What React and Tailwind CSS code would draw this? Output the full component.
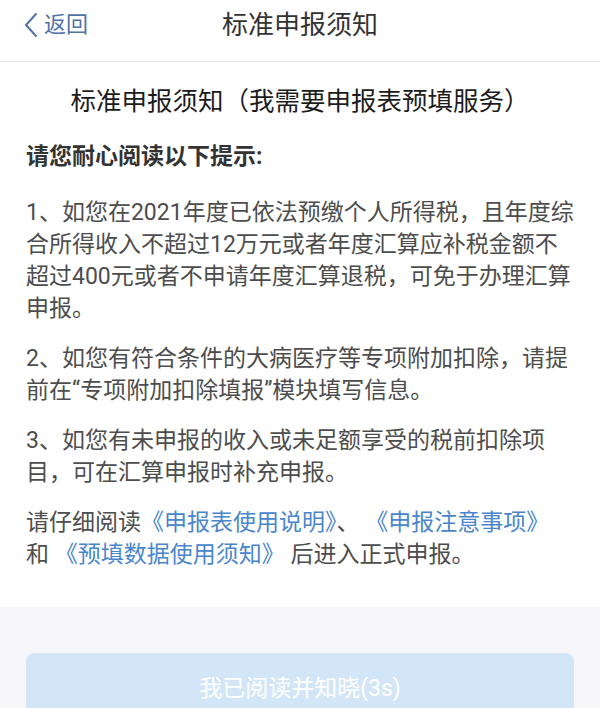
const paragraphs = [
    [
        "1、如您在2021年度已依法预缴个人所得税，且年度综",
        "合所得收入不超过12万元或者年度汇算应补税金额不",
        "超过400元或者不申请年度汇算退税，可免于办理汇算",
        "申报。",
    ],
    [
        "2、如您有符合条件的大病医疗等专项附加扣除，请提",
        "前在“专项附加扣除填报”模块填写信息。",
    ],
    [
        "3、如您有未申报的收入或未足额享受的税前扣除项",
        "目，可在汇算申报时补充申报。",
    ],
];

const App = () => {
    return (
        <div className="min-h-[708px] bg-[#f7f7f9] font-['Roboto','Noto_Sans_CJK_SC',sans-serif]">
            {/* Header */}
            <div className="relative flex h-[62px] items-start justify-center border-b border-[#e6e6e6] bg-white pt-[8px]">
                <button className="absolute left-[24px] top-[8px] flex items-center gap-[6px] text-[22px] leading-[34px] text-[#4f72a8]">
                    <svg width="14" height="26" viewBox="0 0 14 26" fill="none">
                        <path d="M12 2 L2 13 L12 24" stroke="#4f72a8" strokeWidth="2" strokeLinecap="round" strokeLinejoin="round" />
                    </svg>
                    <span>返回</span>
                </button>
                <h1 className="text-[26px] leading-[34px] text-[#333333]">标准申报须知</h1>
            </div>

            {/* Main Content */}
            <div className="bg-white px-[26px] pt-[21px] pb-[36px]">
                <h2 className="text-center text-[25.5px] leading-[36px] text-[#1c1c1c]">
                    标准申报须知（我需要申报表预填服务）
                </h2>
                <p className="mt-[22px] text-[23px] font-bold leading-[31px] text-[#333333]">
                    请您耐心阅读以下提示:
                </p>

                <div className="mt-[25px] text-[23px] leading-[32px] text-[#4d4d4d]">
                    {paragraphs.map((lines, i) => (
                        <p key={i} className={i > 0 ? "mt-[18px]" : ""}>
                            {lines.map((line) => (
                                <span key={line} className="block whitespace-nowrap">
                                    {line}
                                </span>
                            ))}
                        </p>
                    ))}
                    <p className="mt-[18px]">
                        <span className="block whitespace-nowrap">
                            请仔细阅读<span className="text-[#4a86cc]">《申报表使用说明》</span>、{" "}
                            <span className="text-[#4a86cc]">《申报注意事项》</span>
                        </span>
                        <span className="block whitespace-nowrap">
                            和 <span className="text-[#4a86cc]">《预填数据使用须知》</span> 后进入正式申报。
                        </span>
                    </p>
                </div>
            </div>

            {/* Footer button */}
            <div className="px-[26px] pt-[46px]">
                <button className="flex h-[72px] w-full items-center justify-center rounded-[8px] bg-[#d3e6f8] text-[23px] text-white">
                    我已阅读并知晓(3s)
                </button>
            </div>
        </div>
    );
};

export default App;
